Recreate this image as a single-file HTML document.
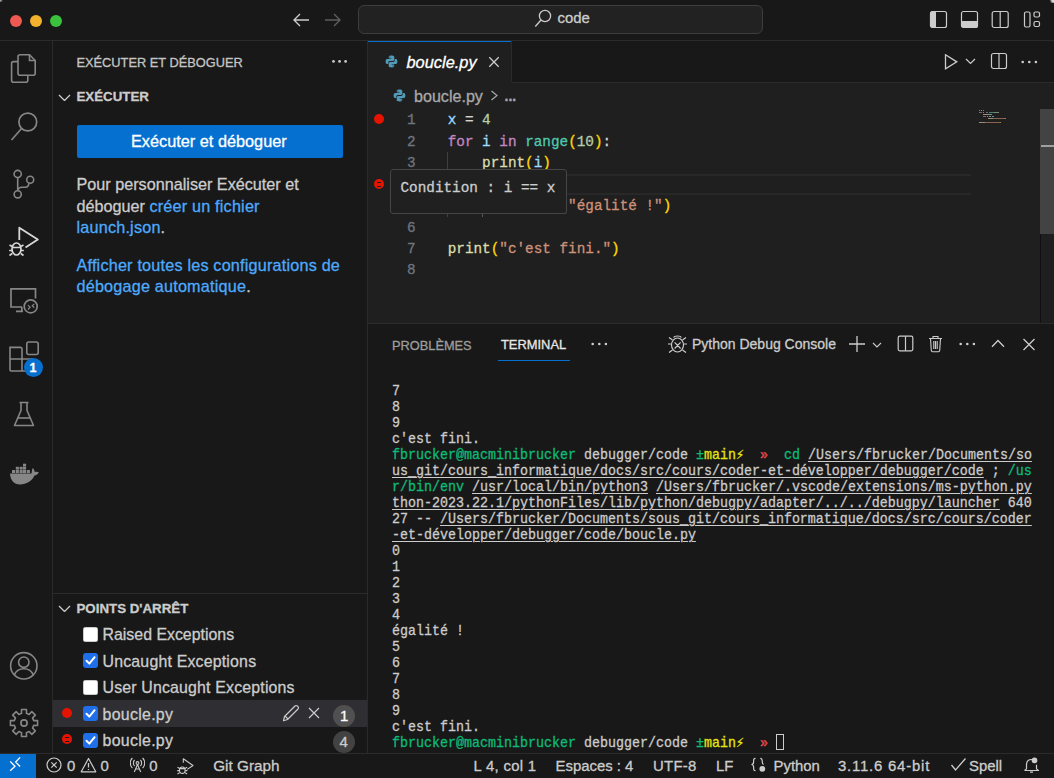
<!DOCTYPE html>
<html><head><meta charset="utf-8"><style>
html,body{margin:0;padding:0;}
body{width:1054px;height:778px;overflow:hidden;position:relative;background:#181818;font-family:'Liberation Sans', sans-serif;}
.r{position:absolute;}
.t{position:absolute;line-height:0;white-space:pre;-webkit-text-stroke:0.3px currentColor;}
u{text-decoration:underline;text-underline-offset:2px;text-decoration-thickness:1px;}
</style></head><body>
<div class="r" style="left:0px;top:0px;width:1054px;height:40px;background:#181818;"></div>
<div class="r" style="left:0px;top:40px;width:1054px;height:1px;background:#2b2b2b;"></div>
<div class="r" style="left:10px;top:14.7px;width:12px;height:12px;border-radius:50%;background:#ee5952"></div>
<div class="r" style="left:30px;top:14.7px;width:12px;height:12px;border-radius:50%;background:#f4b12b"></div>
<div class="r" style="left:50px;top:14.7px;width:12px;height:12px;border-radius:50%;background:#3ac13e"></div>
<svg class="r" style="left:292px;top:12px" width="19" height="16" viewBox="0 0 19 16" fill="none"><path d="M2 8 H17 M8 2 L2 8 L8 14" stroke="#cccccc" stroke-width="1.4"/></svg>
<svg class="r" style="left:324px;top:12px" width="19" height="16" viewBox="0 0 19 16" fill="none"><path d="M1 8 H16 M10 2 L16 8 L10 14" stroke="#5e5e5e" stroke-width="1.4"/></svg>
<div class="r" style="left:358px;top:5px;width:403px;height:27px;border:1px solid #3d3d3d;border-radius:6px;background:#222222"></div>
<svg class="r" style="left:534px;top:9px" width="18" height="19" viewBox="0 0 18 19" fill="none"><circle cx="11" cy="7" r="5.6" stroke="#cccccc" stroke-width="1.3"/><path d="M7 11 L1.3 17.5" stroke="#cccccc" stroke-width="1.3"/></svg>
<div class="t" style="left:557.50px;top:18.48px;font-family:'Liberation Sans', sans-serif;font-size:14.9px;color:#cccccc;font-weight:400;font-style:normal;">code</div>
<svg class="r" style="left:929px;top:10px" width="19" height="19" viewBox="0 0 19 19" fill="none"><rect x="1.5" y="1.5" width="16" height="16" rx="2" stroke="#cccccc" stroke-width="1.2"/><rect x="1.5" y="1.5" width="5.5" height="16" rx="1" fill="#cccccc"/></svg>
<svg class="r" style="left:960px;top:10px" width="19" height="19" viewBox="0 0 19 19" fill="none"><rect x="1.5" y="1.5" width="16" height="16" rx="2" stroke="#cccccc" stroke-width="1.2"/><rect x="1.5" y="11" width="16" height="6.5" rx="1" fill="#cccccc"/></svg>
<svg class="r" style="left:991px;top:10px" width="19" height="19" viewBox="0 0 19 19" fill="none"><rect x="1.2" y="1.5" width="16" height="16" rx="2" stroke="#cccccc" stroke-width="1.2"/><path d="M9.2 1.5 V17.5" stroke="#cccccc" stroke-width="1.2"/></svg>
<svg class="r" style="left:1023px;top:10px" width="19" height="19" viewBox="0 0 19 19" fill="none"><rect x="1.5" y="2" width="5.5" height="15" rx="1.5" stroke="#cccccc" stroke-width="1.2"/><rect x="11" y="2" width="5.5" height="5" rx="1.5" stroke="#cccccc" stroke-width="1.2"/><rect x="11" y="11.5" width="5.5" height="5" rx="1.5" stroke="#cccccc" stroke-width="1.2"/></svg>
<div class="r" style="left:0px;top:41px;width:52px;height:713px;background:#181818;"></div>
<div class="r" style="left:52px;top:41px;width:1px;height:712px;background:#2b2b2b;"></div>
<svg class="r" style="left:9px;top:52px" width="30" height="33" viewBox="0 0 30 33" fill="none"><path d="M9 9.6 H4.6 a2 2 0 0 0 -2 2 V28.2 a2 2 0 0 0 2 2 H16.8 a2 2 0 0 0 2 -2 V23.2" stroke="#868686" stroke-width="1.6"/><path d="M11 2.8 H20.5 L26.2 8.5 V21.2 a2 2 0 0 1 -2 2 H11 a2 2 0 0 1 -2 -2 V4.8 a2 2 0 0 1 2 -2 Z" stroke="#868686" stroke-width="1.6"/><path d="M20.5 2.8 V8.5 H26.2" stroke="#868686" stroke-width="1.6"/></svg>
<svg class="r" style="left:9px;top:110px" width="30" height="33" viewBox="0 0 30 33" fill="none"><circle cx="18.8" cy="12" r="8.9" stroke="#868686" stroke-width="1.7"/><path d="M12.8 18.2 L2.5 30" stroke="#868686" stroke-width="1.7"/></svg>
<svg class="r" style="left:9px;top:166px" width="30" height="34" viewBox="0 0 30 34" fill="none"><circle cx="8.7" cy="8" r="3.6" stroke="#868686" stroke-width="1.6"/><circle cx="8.7" cy="28.3" r="3.6" stroke="#868686" stroke-width="1.6"/><circle cx="21.2" cy="13.8" r="3.5" stroke="#868686" stroke-width="1.6"/><path d="M8.7 11.6 V24.7 M8.7 24 Q9.5 21.5 13 21.3 H16.5 Q19.6 21.3 20 17.2" stroke="#868686" stroke-width="1.6"/></svg>
<svg class="r" style="left:8px;top:225px" width="32" height="34" viewBox="0 0 32 34" fill="none"><path d="M11.3 15 V2.7 L29.8 14.6 L17.5 22.5" stroke="#d7d7d7" stroke-width="1.8" stroke-linejoin="round"/><ellipse cx="8.5" cy="24" rx="4.5" ry="6" stroke="#d7d7d7" stroke-width="1.7"/><path d="M4 22.5 H13 M1.5 20 L4.2 21.5 M15.5 20 L12.8 21.5 M1.2 25.5 H4 M15.8 25.5 H13 M1.5 30.5 L4.2 28.5 M15.5 30.5 L12.8 28.5" stroke="#d7d7d7" stroke-width="1.6"/></svg>
<svg class="r" style="left:9px;top:286px" width="30" height="30" viewBox="0 0 30 30" fill="none"><path d="M13 21 H2 V2.8 H26.5 V12.5 M7 25.3 H14 M12.8 21 V25.3" stroke="#868686" stroke-width="1.7"/><circle cx="21.7" cy="20.4" r="6.5" stroke="#868686" stroke-width="1.7"/><path d="M18.9 19.1 L21.2 21.2 L18.9 23.5 M25.3 17.9 L23.2 19.8 L25.3 21.7" stroke="#868686" stroke-width="1.2"/></svg>
<svg class="r" style="left:8px;top:340px" width="32" height="32" viewBox="0 0 32 32" fill="none"><path d="M2 7.4 h10.5 a1.5 1.5 0 0 1 1.5 1.5 V19 H24 a1.5 1.5 0 0 1 1.5 1.5 V31 H3.5 a1.5 1.5 0 0 1 -1.5 -1.5 Z M2 19 H14 V31" stroke="#868686" stroke-width="1.6"/><rect x="18.8" y="2" width="11.4" height="12.5" rx="2" stroke="#868686" stroke-width="1.6"/></svg>
<div class="r" style="left:23.9px;top:357.9px;width:19px;height:19px;border-radius:50%;background:#0670d1"></div>
<div class="t" style="left:29.60px;top:367.93px;font-family:'Liberation Sans', sans-serif;font-size:12.5px;color:#ffffff;font-weight:700;font-style:normal;">1</div>
<svg class="r" style="left:12px;top:400px" width="24" height="28" viewBox="0 0 24 28" fill="none"><path d="M7.5 2.5 H16.5 M9 2.5 V10.5 L2.5 25.5 H21.5 L15 10.5 V2.5" stroke="#868686" stroke-width="1.6" stroke-linejoin="round"/><path d="M5.5 18 H18.5" stroke="#868686" stroke-width="1.6"/></svg>
<svg class="r" style="left:9px;top:461px" width="31" height="25" viewBox="0 0 31 25" fill="none"><path d="M1 12.5 H22.5 C23 10.5 22.8 8.5 23.8 7 C24.8 8 25.5 9.5 25.8 11 C27 10.5 28.8 10.6 29.8 11.2 C29 13 27.5 14.5 25.5 14.5 C23 20 17.5 23.5 11 23.5 C5 23.5 1.2 19 1 12.5 Z" fill="#868686"/><g fill="#868686"><rect x="3" y="9" width="3.1" height="3"/><rect x="6.8" y="9" width="3.1" height="3"/><rect x="10.6" y="9" width="3.1" height="3"/><rect x="14" y="9" width="3.1" height="3"/><rect x="17.8" y="9" width="3.1" height="3"/><rect x="6.8" y="5.8" width="3.1" height="2.8"/><rect x="10.6" y="5.8" width="3.1" height="2.8"/><rect x="14" y="5.8" width="3.1" height="2.8"/><rect x="14" y="2.7" width="3.1" height="2.8"/></g></svg>
<svg class="r" style="left:9px;top:651px" width="30" height="30" viewBox="0 0 30 30" fill="none"><circle cx="14.8" cy="14.8" r="13.2" stroke="#868686" stroke-width="1.6"/><circle cx="14.8" cy="11.2" r="5.2" stroke="#868686" stroke-width="1.6"/><path d="M5.3 24.2 C7 19.5 10.5 17.8 14.8 17.8 C19 17.8 22.6 19.5 24.3 24.2" stroke="#868686" stroke-width="1.6"/></svg>
<svg class="r" style="left:9px;top:708px" width="30" height="30" viewBox="0 0 30 30" fill="none"><polygon points="24.70,12.58 28.57,12.49 28.57,17.51 24.70,17.42 23.57,20.15 26.37,22.82 22.82,26.37 20.15,23.57 17.42,24.70 17.51,28.57 12.49,28.57 12.58,24.70 9.85,23.57 7.18,26.37 3.63,22.82 6.43,20.15 5.30,17.42 1.43,17.51 1.43,12.49 5.30,12.58 6.43,9.85 3.63,7.18 7.18,3.63 9.85,6.43 12.58,5.30 12.49,1.43 17.51,1.43 17.42,5.30 20.15,6.43 22.82,3.63 26.37,7.18 23.57,9.85" stroke="#868686" stroke-width="1.6" stroke-linejoin="round"/><circle cx="15" cy="15" r="3.1" stroke="#868686" stroke-width="1.7"/></svg>
<div class="r" style="left:53px;top:41px;width:314px;height:712px;background:#181818;"></div>
<div class="r" style="left:367px;top:41px;width:1px;height:712px;background:#2b2b2b;"></div>
<div class="t" style="left:76.50px;top:62.72px;font-family:'Liberation Sans', sans-serif;font-size:12.8px;color:#c4c4c4;font-weight:400;font-style:normal;">EXÉCUTER ET DÉBOGUER</div>
<svg class="r" style="left:330px;top:58px" width="20" height="6" viewBox="0 0 20 6" fill="none"><circle cx="3.5" cy="3.4" r="1.35" fill="#cccccc"/><circle cx="9.55" cy="3.4" r="1.35" fill="#cccccc"/><circle cx="15.6" cy="3.4" r="1.35" fill="#cccccc"/></svg>
<svg class="r" style="left:58px;top:93.8px" width="13" height="7.5" viewBox="0 0 13 7.5" fill="none"><path d="M1 1 L6.5 6.5 L12 1" stroke="#cccccc" stroke-width="1.3"/></svg>
<div class="t" style="left:76.50px;top:96.64px;font-family:'Liberation Sans', sans-serif;font-size:13.3px;color:#cccccc;font-weight:700;font-style:normal;">EXÉCUTER</div>
<div class="r" style="left:77px;top:125px;width:266px;height:32.5px;border-radius:2px;background:#0670d1"></div>
<div class="t" style="left:131.00px;top:141.29px;font-family:'Liberation Sans', sans-serif;font-size:16.3px;color:#ffffff;font-weight:400;font-style:normal;">Exécuter et déboguer</div>
<div class="t" style="left:76.50px;top:184.43px;font-family:'Liberation Sans', sans-serif;font-size:16.2px;color:#cccccc;font-weight:400;font-style:normal;">Pour personnaliser Exécuter et</div>
<div class="t" style="left:76.50px;top:205.93px;font-family:'Liberation Sans', sans-serif;font-size:16.2px;color:#cccccc;font-weight:400;font-style:normal;">déboguer <span style="color:#4daafc;letter-spacing:0.2px;">créer un fichier</span></div>
<div class="t" style="left:76.50px;top:227.23px;font-family:'Liberation Sans', sans-serif;font-size:16.2px;color:#cccccc;font-weight:400;font-style:normal;"><span style="color:#4daafc;letter-spacing:0.2px;">launch.json</span>.</div>
<div class="t" style="left:76.50px;top:264.83px;font-family:'Liberation Sans', sans-serif;font-size:16.2px;color:#cccccc;font-weight:400;font-style:normal;"><span style="color:#4daafc;letter-spacing:0.2px;">Afficher toutes les configurations de</span></div>
<div class="t" style="left:76.50px;top:286.13px;font-family:'Liberation Sans', sans-serif;font-size:16.2px;color:#cccccc;font-weight:400;font-style:normal;"><span style="color:#4daafc;letter-spacing:0.2px;">débogage automatique</span>.</div>
<div class="r" style="left:53px;top:593px;width:314px;height:1px;background:#2b2b2b;"></div>
<svg class="r" style="left:58px;top:604.6px" width="13" height="7.5" viewBox="0 0 13 7.5" fill="none"><path d="M1 1 L6.5 6.5 L12 1" stroke="#cccccc" stroke-width="1.3"/></svg>
<div class="t" style="left:76.50px;top:608.85px;font-family:'Liberation Sans', sans-serif;font-size:13.3px;color:#cccccc;font-weight:700;font-style:normal;">POINTS D'ARRÊT</div>
<div class="r" style="left:53px;top:700px;width:314px;height:27px;background:#2e2e33;"></div>
<div class="r" style="left:83px;top:626.5px;width:15px;height:15px;border-radius:3px;background:#ffffff;box-shadow:inset 0 0 0 0.5px #9a9a9a"></div>
<div class="t" style="left:102.50px;top:635.43px;font-family:'Liberation Sans', sans-serif;font-size:15.9px;color:#cccccc;font-weight:400;font-style:normal;letter-spacing:0px">Raised Exceptions</div>
<div class="r" style="left:83px;top:653px;width:15px;height:15px;border-radius:3px;background:#1f6feb"></div>
<svg class="r" style="left:83px;top:653px" width="15" height="15" viewBox="0 0 15 15" fill="none"><path d="M3.5 7.8 L6.3 10.6 L11.6 4.2" stroke="#ffffff" stroke-width="2" stroke-linecap="round" stroke-linejoin="round"/></svg>
<div class="t" style="left:102.50px;top:661.93px;font-family:'Liberation Sans', sans-serif;font-size:15.9px;color:#cccccc;font-weight:400;font-style:normal;letter-spacing:0.19px">Uncaught Exceptions</div>
<div class="r" style="left:83px;top:679.5px;width:15px;height:15px;border-radius:3px;background:#ffffff;box-shadow:inset 0 0 0 0.5px #9a9a9a"></div>
<div class="t" style="left:102.50px;top:688.43px;font-family:'Liberation Sans', sans-serif;font-size:15.9px;color:#cccccc;font-weight:400;font-style:normal;letter-spacing:0.17px">User Uncaught Exceptions</div>
<div class="r" style="left:83px;top:706px;width:15px;height:15px;border-radius:3px;background:#1f6feb"></div>
<svg class="r" style="left:83px;top:706px" width="15" height="15" viewBox="0 0 15 15" fill="none"><path d="M3.5 7.8 L6.3 10.6 L11.6 4.2" stroke="#ffffff" stroke-width="2" stroke-linecap="round" stroke-linejoin="round"/></svg>
<div class="t" style="left:102.50px;top:714.93px;font-family:'Liberation Sans', sans-serif;font-size:15.9px;color:#cccccc;font-weight:400;font-style:normal;letter-spacing:0.3px">boucle.py</div>
<div class="r" style="left:83px;top:732.5px;width:15px;height:15px;border-radius:3px;background:#1f6feb"></div>
<svg class="r" style="left:83px;top:732.5px" width="15" height="15" viewBox="0 0 15 15" fill="none"><path d="M3.5 7.8 L6.3 10.6 L11.6 4.2" stroke="#ffffff" stroke-width="2" stroke-linecap="round" stroke-linejoin="round"/></svg>
<div class="t" style="left:102.50px;top:741.43px;font-family:'Liberation Sans', sans-serif;font-size:15.9px;color:#cccccc;font-weight:400;font-style:normal;letter-spacing:0.3px">boucle.py</div>
<div class="r" style="left:61.9px;top:708.4px;width:9.8px;height:9.8px;border-radius:50%;background:#e51400"></div>
<div class="r" style="left:61.9px;top:734.3px;width:9.8px;height:9.8px;border-radius:50%;background:#e51400"></div>
<div class="r" style="left:64.5px;top:737.3px;width:4.6px;height:1.2px;background:#181818;"></div>
<div class="r" style="left:64.5px;top:740.6px;width:4.6px;height:1.2px;background:#181818;"></div>
<svg class="r" style="left:281px;top:703px" width="19" height="20" viewBox="0 0 19 20" fill="none"><path d="M2.5 17.8 L3.5 13.5 L14 3 a1.6 1.6 0 0 1 2.3 0 L17 3.7 a1.6 1.6 0 0 1 0 2.3 L6.5 16.5 Z M4 13 L7 16" stroke="#cccccc" stroke-width="1.2" stroke-linejoin="round"/></svg>
<svg class="r" style="left:308px;top:707px" width="12" height="12" viewBox="0 0 12 12" fill="none"><path d="M1 1 L11 11 M11 1 L1 11" stroke="#cccccc" stroke-width="1.2"/></svg>
<div class="r" style="left:333px;top:704.9px;width:22px;height:22px;border-radius:50%;background:#505050"></div>
<div class="t" style="left:340.00px;top:715.75px;font-family:'Liberation Sans', sans-serif;font-size:15px;color:#ffffff;font-weight:400;font-style:normal;">1</div>
<div class="r" style="left:333px;top:731.2px;width:22px;height:22px;border-radius:50%;background:#424242"></div>
<div class="t" style="left:339.50px;top:741.95px;font-family:'Liberation Sans', sans-serif;font-size:15px;color:#cccccc;font-weight:400;font-style:normal;">4</div>
<div class="r" style="left:368px;top:41px;width:686px;height:282px;background:#1f1f1f;"></div>
<div class="r" style="left:511px;top:41px;width:543px;height:41px;background:#181818;"></div>
<div class="r" style="left:511px;top:41px;width:1px;height:41px;background:#2b2b2b;"></div>
<div class="r" style="left:512px;top:82px;width:542px;height:1px;background:#2b2b2b;"></div>
<div class="r" style="left:368px;top:41px;width:143px;height:1px;background:#0670d1;"></div>
<svg class="r" style="left:385px;top:55px" width="13" height="13" viewBox="0 0 13 13" fill="none"><path d="M6.3 0.6 C3.6 0.6 3.8 1.8 3.8 1.8 V3.4 H6.4 V4 H2.5 C2.5 4 0.6 3.8 0.6 6.5 C0.6 9.2 2.3 9.1 2.3 9.1 H3.3 V7.7 C3.3 7.7 3.2 6 5 6 H7.7 C7.7 6 9.3 6 9.3 4.5 V2 C9.3 2 9.6 0.6 6.3 0.6 Z M4.9 1.5 a0.5 0.5 0 1 1 0 1 a0.5 0.5 0 0 1 0 -1Z" fill="#519aba"/><path d="M6.7 12.4 C9.4 12.4 9.2 11.2 9.2 11.2 V9.6 H6.6 V9 H10.5 C10.5 9 12.4 9.2 12.4 6.5 C12.4 3.8 10.7 3.9 10.7 3.9 H9.7 V5.3 C9.7 5.3 9.8 7 8 7 H5.3 C5.3 7 3.7 7 3.7 8.5 V11 C3.7 11 3.4 12.4 6.7 12.4 Z M8.1 11.5 a0.5 0.5 0 1 1 0 -1 a0.5 0.5 0 0 1 0 1Z" fill="#519aba"/></svg>
<div class="t" style="left:406.50px;top:62.16px;font-family:'Liberation Sans', sans-serif;font-size:16.4px;color:#ffffff;font-weight:400;font-style:italic;">boucle.py</div>
<svg class="r" style="left:488px;top:56px" width="12" height="12" viewBox="0 0 12 12" fill="none"><path d="M1.3 1.3 L10.7 10.7 M10.7 1.3 L1.3 10.7" stroke="#cccccc" stroke-width="1.3"/></svg>
<svg class="r" style="left:943px;top:53px" width="16" height="18" viewBox="0 0 16 18" fill="none"><path d="M2.5 1.8 L13.8 8.85 L2.5 15.9 Z" stroke="#cccccc" stroke-width="1.3" stroke-linejoin="miter"/></svg>
<svg class="r" style="left:965px;top:57.6px" width="11" height="7" viewBox="0 0 11 7" fill="none"><path d="M1 1 L5.5 5.5 L10 1" stroke="#cccccc" stroke-width="1.2"/></svg>
<svg class="r" style="left:990px;top:52px" width="18" height="18" viewBox="0 0 18 18" fill="none"><rect x="1.5" y="1.5" width="15" height="15" rx="2" stroke="#cccccc" stroke-width="1.2"/><path d="M9 1.5 V16.5" stroke="#cccccc" stroke-width="1.2"/></svg>
<svg class="r" style="left:1020px;top:59px" width="19" height="6" viewBox="0 0 19 6" fill="none"><circle cx="2.7" cy="3" r="1.3" fill="#cccccc"/><circle cx="9.3" cy="3" r="1.3" fill="#cccccc"/><circle cx="15.9" cy="3" r="1.3" fill="#cccccc"/></svg>
<svg class="r" style="left:392.5px;top:89px" width="13" height="13" viewBox="0 0 13 13" fill="none"><path d="M6.3 0.6 C3.6 0.6 3.8 1.8 3.8 1.8 V3.4 H6.4 V4 H2.5 C2.5 4 0.6 3.8 0.6 6.5 C0.6 9.2 2.3 9.1 2.3 9.1 H3.3 V7.7 C3.3 7.7 3.2 6 5 6 H7.7 C7.7 6 9.3 6 9.3 4.5 V2 C9.3 2 9.6 0.6 6.3 0.6 Z M4.9 1.5 a0.5 0.5 0 1 1 0 1 a0.5 0.5 0 0 1 0 -1Z" fill="#519aba"/><path d="M6.7 12.4 C9.4 12.4 9.2 11.2 9.2 11.2 V9.6 H6.6 V9 H10.5 C10.5 9 12.4 9.2 12.4 6.5 C12.4 3.8 10.7 3.9 10.7 3.9 H9.7 V5.3 C9.7 5.3 9.8 7 8 7 H5.3 C5.3 7 3.7 7 3.7 8.5 V11 C3.7 11 3.4 12.4 6.7 12.4 Z M8.1 11.5 a0.5 0.5 0 1 1 0 -1 a0.5 0.5 0 0 1 0 1Z" fill="#519aba"/></svg>
<div class="t" style="left:414.00px;top:95.56px;font-family:'Liberation Sans', sans-serif;font-size:16.1px;color:#a9a9a9;font-weight:400;font-style:normal;">boucle.py</div>
<svg class="r" style="left:490px;top:90px" width="9" height="11" viewBox="0 0 9 11" fill="none"><path d="M1.5 1 L7 5.5 L1.5 10" stroke="#a9a9a9" stroke-width="1.2"/></svg>
<div class="t" style="left:504.50px;top:95.60px;font-family:'Liberation Sans', sans-serif;font-size:14px;color:#a9a9a9;font-weight:700;font-style:normal;">...</div>
<div class="r" style="left:447px;top:174px;width:524px;height:1.5px;background:#282828;"></div>
<div class="r" style="left:447px;top:193.3px;width:524px;height:1.5px;background:#282828;"></div>
<div class="r" style="left:446.8px;top:151.9px;width:1px;height:64.94999999999999px;background:#404040;"></div>
<div class="r" style="left:482px;top:194.8px;width:1px;height:22.05px;background:#5a5a5a;"></div>
<div class="t" style="left:406.90px;top:120.27px;font-family:'Liberation Mono', monospace;font-size:14.33px;color:#6e7681;font-weight:400;font-style:normal;">1</div>
<div class="t" style="left:406.90px;top:141.72px;font-family:'Liberation Mono', monospace;font-size:14.33px;color:#6e7681;font-weight:400;font-style:normal;">2</div>
<div class="t" style="left:406.90px;top:163.17px;font-family:'Liberation Mono', monospace;font-size:14.33px;color:#6e7681;font-weight:400;font-style:normal;">3</div>
<div class="t" style="left:406.90px;top:184.62px;font-family:'Liberation Mono', monospace;font-size:14.33px;color:#6e7681;font-weight:400;font-style:normal;">4</div>
<div class="t" style="left:406.90px;top:206.07px;font-family:'Liberation Mono', monospace;font-size:14.33px;color:#6e7681;font-weight:400;font-style:normal;">5</div>
<div class="t" style="left:406.90px;top:227.52px;font-family:'Liberation Mono', monospace;font-size:14.33px;color:#6e7681;font-weight:400;font-style:normal;">6</div>
<div class="t" style="left:406.90px;top:248.97px;font-family:'Liberation Mono', monospace;font-size:14.33px;color:#6e7681;font-weight:400;font-style:normal;">7</div>
<div class="t" style="left:406.90px;top:270.42px;font-family:'Liberation Mono', monospace;font-size:14.33px;color:#6e7681;font-weight:400;font-style:normal;">8</div>
<div class="t" style="left:447.70px;top:120.27px;font-family:'Liberation Mono', monospace;font-size:14.33px;color:#d4d4d4;font-weight:400;font-style:normal;white-space:pre;"><span style="color:#9cdcfe">x</span><span style="color:#d4d4d4"> = </span><span style="color:#b5cea8">4</span></div>
<div class="t" style="left:447.70px;top:141.72px;font-family:'Liberation Mono', monospace;font-size:14.33px;color:#d4d4d4;font-weight:400;font-style:normal;white-space:pre;"><span style="color:#c586c0">for</span> <span style="color:#9cdcfe">i</span> <span style="color:#c586c0">in</span> <span style="color:#4ec9b0">range</span><span style="color:#ffd700">(</span><span style="color:#b5cea8">10</span><span style="color:#ffd700">)</span><span style="color:#d4d4d4">:</span></div>
<div class="t" style="left:447.70px;top:163.17px;font-family:'Liberation Mono', monospace;font-size:14.33px;color:#d4d4d4;font-weight:400;font-style:normal;white-space:pre;">    <span style="color:#dcdcaa">print</span><span style="color:#ffd700">(</span><span style="color:#9cdcfe">i</span><span style="color:#ffd700">)</span></div>
<div class="t" style="left:447.70px;top:184.62px;font-family:'Liberation Mono', monospace;font-size:14.33px;color:#d4d4d4;font-weight:400;font-style:normal;white-space:pre;">    <span style="color:#c586c0">if</span> <span style="color:#9cdcfe">i</span><span style="color:#d4d4d4"> == </span><span style="color:#9cdcfe">x</span><span style="color:#d4d4d4">:</span></div>
<div class="t" style="left:447.70px;top:206.07px;font-family:'Liberation Mono', monospace;font-size:14.33px;color:#d4d4d4;font-weight:400;font-style:normal;white-space:pre;">        <span style="color:#dcdcaa">print</span><span style="color:#ffd700">(</span><span style="color:#ce9178">"égalité !"</span><span style="color:#ffd700">)</span></div>
<div class="t" style="left:447.70px;top:248.97px;font-family:'Liberation Mono', monospace;font-size:14.33px;color:#d4d4d4;font-weight:400;font-style:normal;white-space:pre;"><span style="color:#dcdcaa">print</span><span style="color:#ffd700">(</span><span style="color:#ce9178">"c'est fini."</span><span style="color:#ffd700">)</span></div>
<div class="r" style="left:374px;top:114.3px;width:10px;height:10px;border-radius:50%;background:#e51400"></div>
<div class="r" style="left:373.9px;top:179.4px;width:10px;height:10px;border-radius:50%;background:#e51400"></div>
<div class="r" style="left:376.6px;top:182px;width:4.6px;height:1.1px;background:#1f1f1f;"></div>
<div class="r" style="left:376.6px;top:185.9px;width:4.6px;height:1.1px;background:#1f1f1f;"></div>
<div class="r" style="left:389.6px;top:169px;width:175.5px;height:43px;border:1px solid #454545;border-radius:3px;background:#202020"></div>
<div class="t" style="left:400.50px;top:188.07px;font-family:'Liberation Mono', monospace;font-size:14.33px;color:#cccccc;font-weight:400;font-style:normal;white-space:pre;">Condition : i == x</div>
<div class="r" style="left:979.0px;top:109.5px;width:1.1px;height:1.6px;background:#9cdcfe;opacity:0.6"></div>
<div class="r" style="left:981.2px;top:109.5px;width:1.1px;height:1.6px;background:#d4d4d4;opacity:0.6"></div>
<div class="r" style="left:983.4px;top:109.5px;width:1.1px;height:1.6px;background:#b5cea8;opacity:0.6"></div>
<div class="r" style="left:979.0px;top:111.5px;width:3.3000000000000003px;height:1.6px;background:#c586c0;opacity:0.6"></div>
<div class="r" style="left:983.4px;top:111.5px;width:1.1px;height:1.6px;background:#9cdcfe;opacity:0.6"></div>
<div class="r" style="left:985.6px;top:111.5px;width:2.2px;height:1.6px;background:#c586c0;opacity:0.6"></div>
<div class="r" style="left:988.9px;top:111.5px;width:5.5px;height:1.6px;background:#4ec9b0;opacity:0.6"></div>
<div class="r" style="left:994.4px;top:111.5px;width:4.4px;height:1.6px;background:#b5cea8;opacity:0.6"></div>
<div class="r" style="left:983.4px;top:113.5px;width:5.5px;height:1.6px;background:#dcdcaa;opacity:0.6"></div>
<div class="r" style="left:988.9px;top:113.5px;width:3.3000000000000003px;height:1.6px;background:#9cdcfe;opacity:0.6"></div>
<div class="r" style="left:983.4px;top:115.5px;width:2.2px;height:1.6px;background:#c586c0;opacity:0.6"></div>
<div class="r" style="left:986.7px;top:115.5px;width:1.1px;height:1.6px;background:#9cdcfe;opacity:0.6"></div>
<div class="r" style="left:988.9px;top:115.5px;width:2.2px;height:1.6px;background:#d4d4d4;opacity:0.6"></div>
<div class="r" style="left:992.2px;top:115.5px;width:2.2px;height:1.6px;background:#9cdcfe;opacity:0.6"></div>
<div class="r" style="left:987.8px;top:117.5px;width:5.5px;height:1.6px;background:#dcdcaa;opacity:0.6"></div>
<div class="r" style="left:993.3px;top:117.5px;width:12.100000000000001px;height:1.6px;background:#ce9178;opacity:0.6"></div>
<div class="r" style="left:1005.4px;top:117.5px;width:1.1px;height:1.6px;background:#ffd700;opacity:0.6"></div>
<div class="r" style="left:979.0px;top:121.5px;width:5.5px;height:1.6px;background:#dcdcaa;opacity:0.6"></div>
<div class="r" style="left:984.5px;top:121.5px;width:15.400000000000002px;height:1.6px;background:#ce9178;opacity:0.6"></div>
<div class="r" style="left:999.9px;top:121.5px;width:1.1px;height:1.6px;background:#ffd700;opacity:0.6"></div>
<div class="r" style="left:1040px;top:109px;width:14px;height:125px;background:#434343;"></div>
<div class="r" style="left:1041px;top:145.2px;width:13px;height:2px;background:#a0a0a0;"></div>
<div class="r" style="left:1040px;top:234px;width:1px;height:89px;background:#101014;"></div>
<div class="r" style="left:368px;top:323px;width:686px;height:1px;background:#2b2b2b;"></div>
<div class="r" style="left:368px;top:324px;width:686px;height:429px;background:#181818;"></div>
<div class="t" style="left:392.00px;top:345.52px;font-family:'Liberation Sans', sans-serif;font-size:12.8px;color:#9d9d9d;font-weight:400;font-style:normal;">PROBLÈMES</div>
<div class="t" style="left:501.00px;top:345.49px;font-family:'Liberation Sans', sans-serif;font-size:12.9px;color:#e7e7e7;font-weight:400;font-style:normal;">TERMINAL</div>
<div class="r" style="left:498px;top:359.5px;width:72px;height:1.5px;background:#0670d1;"></div>
<svg class="r" style="left:590px;top:341px" width="19" height="6" viewBox="0 0 19 6" fill="none"><circle cx="2.7" cy="3" r="1.3" fill="#cccccc"/><circle cx="9.3" cy="3" r="1.3" fill="#cccccc"/><circle cx="15.9" cy="3" r="1.3" fill="#cccccc"/></svg>
<svg class="r" style="left:667px;top:333px" width="21" height="22" viewBox="0 0 21 22" fill="none"><path d="M6.5 4.5 C7.5 2.5 13.5 2.5 14.5 4.5" stroke="#cccccc" stroke-width="1.2"/><ellipse cx="10.5" cy="12" rx="6" ry="7" stroke="#cccccc" stroke-width="1.2"/><path d="M7.6 9.3 L13.6 15.5 M13.6 9.3 L7.6 15.5 M1 11 H4.5 M16.5 11 H20 M2 4.5 L5.5 7 M19 4.5 L15.5 7 M2 19.5 L5.5 17 M19 19.5 L15.5 17" stroke="#cccccc" stroke-width="1.2"/></svg>
<div class="t" style="left:692.00px;top:344.40px;font-family:'Liberation Sans', sans-serif;font-size:14.0px;color:#cccccc;font-weight:400;font-style:normal;">Python Debug Console</div>
<svg class="r" style="left:848px;top:335px" width="18" height="18" viewBox="0 0 18 18" fill="none"><path d="M9 1 V17 M1 9 H17" stroke="#cccccc" stroke-width="1.3"/></svg>
<svg class="r" style="left:872px;top:342px" width="10" height="6" viewBox="0 0 10 6" fill="none"><path d="M1 1 L5 5 L9 1" stroke="#cccccc" stroke-width="1.1"/></svg>
<svg class="r" style="left:897px;top:335px" width="17" height="17" viewBox="0 0 17 17" fill="none"><rect x="1.2" y="1.2" width="14.6" height="14.6" rx="1.5" stroke="#cccccc" stroke-width="1.2"/><path d="M8.5 1.2 V15.8" stroke="#cccccc" stroke-width="1.2"/></svg>
<svg class="r" style="left:928px;top:335px" width="15" height="18" viewBox="0 0 15 18" fill="none"><path d="M1 3.5 H14 M5 3.5 V1.5 H10 V3.5 M2.5 3.5 L3.3 15.5 a1.3 1.3 0 0 0 1.3 1.2 H10.4 a1.3 1.3 0 0 0 1.3 -1.2 L12.5 3.5 M5.8 6 V14 M7.5 6 V14 M9.2 6 V14" stroke="#cccccc" stroke-width="1.1"/></svg>
<svg class="r" style="left:958px;top:341px" width="19" height="6" viewBox="0 0 19 6" fill="none"><circle cx="2.7" cy="3" r="1.3" fill="#cccccc"/><circle cx="9.3" cy="3" r="1.3" fill="#cccccc"/><circle cx="15.9" cy="3" r="1.3" fill="#cccccc"/></svg>
<svg class="r" style="left:991px;top:339px" width="14" height="9" viewBox="0 0 14 9" fill="none"><path d="M1 7.8 L7 1.5 L13 7.8" stroke="#cccccc" stroke-width="1.3"/></svg>
<svg class="r" style="left:1022px;top:338px" width="14" height="13" viewBox="0 0 14 13" fill="none"><path d="M1.5 1 L12.5 12 M12.5 1 L1.5 12" stroke="#cccccc" stroke-width="1.3"/></svg>
<div class="t" style="left:392.00px;top:390.70px;font-family:'Liberation Mono', monospace;font-size:14.6px;color:#cccccc;font-weight:400;font-style:normal;white-space:pre;transform:scaleX(0.9132);transform-origin:0 0;">7</div>
<div class="t" style="left:392.00px;top:406.70px;font-family:'Liberation Mono', monospace;font-size:14.6px;color:#cccccc;font-weight:400;font-style:normal;white-space:pre;transform:scaleX(0.9132);transform-origin:0 0;">8</div>
<div class="t" style="left:392.00px;top:422.70px;font-family:'Liberation Mono', monospace;font-size:14.6px;color:#cccccc;font-weight:400;font-style:normal;white-space:pre;transform:scaleX(0.9132);transform-origin:0 0;">9</div>
<div class="t" style="left:392.00px;top:438.70px;font-family:'Liberation Mono', monospace;font-size:14.6px;color:#cccccc;font-weight:400;font-style:normal;white-space:pre;transform:scaleX(0.9132);transform-origin:0 0;">c'est fini.</div>
<div class="t" style="left:392.00px;top:454.70px;font-family:'Liberation Mono', monospace;font-size:14.6px;color:#cccccc;font-weight:400;font-style:normal;white-space:pre;transform:scaleX(0.9132);transform-origin:0 0;"><span style="color:#0dbc79">fbrucker@macminibrucker</span> debugger/code <span style="color:#0dbc79">±</span><span style="color:#e5e510">main⚡</span>  <span style="color:#f14c4c">»</span>  <span style="color:#0dbc79">cd</span> <u>/Users/fbrucker/Documents/so</u></div>
<div class="t" style="left:392.00px;top:470.70px;font-family:'Liberation Mono', monospace;font-size:14.6px;color:#cccccc;font-weight:400;font-style:normal;white-space:pre;transform:scaleX(0.9132);transform-origin:0 0;"><u>us_git/cours_informatique/docs/src/cours/coder-et-développer/debugger/code</u> ; <span style="color:#0dbc79">/us</span></div>
<div class="t" style="left:392.00px;top:486.70px;font-family:'Liberation Mono', monospace;font-size:14.6px;color:#cccccc;font-weight:400;font-style:normal;white-space:pre;transform:scaleX(0.9132);transform-origin:0 0;"><span style="color:#0dbc79">r/bin/env</span> <u>/usr/local/bin/python3</u> <u>/Users/fbrucker/.vscode/extensions/ms-python.py</u></div>
<div class="t" style="left:392.00px;top:502.70px;font-family:'Liberation Mono', monospace;font-size:14.6px;color:#cccccc;font-weight:400;font-style:normal;white-space:pre;transform:scaleX(0.9132);transform-origin:0 0;"><u>thon-2023.22.1/pythonFiles/lib/python/debugpy/adapter/../../debugpy/launcher</u> 640</div>
<div class="t" style="left:392.00px;top:518.70px;font-family:'Liberation Mono', monospace;font-size:14.6px;color:#cccccc;font-weight:400;font-style:normal;white-space:pre;transform:scaleX(0.9132);transform-origin:0 0;">27 -- <u>/Users/fbrucker/Documents/sous_git/cours_informatique/docs/src/cours/coder</u></div>
<div class="t" style="left:392.00px;top:534.70px;font-family:'Liberation Mono', monospace;font-size:14.6px;color:#cccccc;font-weight:400;font-style:normal;white-space:pre;transform:scaleX(0.9132);transform-origin:0 0;"><u>-et-développer/debugger/code/boucle.py</u></div>
<div class="t" style="left:392.00px;top:550.70px;font-family:'Liberation Mono', monospace;font-size:14.6px;color:#cccccc;font-weight:400;font-style:normal;white-space:pre;transform:scaleX(0.9132);transform-origin:0 0;">0</div>
<div class="t" style="left:392.00px;top:566.70px;font-family:'Liberation Mono', monospace;font-size:14.6px;color:#cccccc;font-weight:400;font-style:normal;white-space:pre;transform:scaleX(0.9132);transform-origin:0 0;">1</div>
<div class="t" style="left:392.00px;top:582.70px;font-family:'Liberation Mono', monospace;font-size:14.6px;color:#cccccc;font-weight:400;font-style:normal;white-space:pre;transform:scaleX(0.9132);transform-origin:0 0;">2</div>
<div class="t" style="left:392.00px;top:598.70px;font-family:'Liberation Mono', monospace;font-size:14.6px;color:#cccccc;font-weight:400;font-style:normal;white-space:pre;transform:scaleX(0.9132);transform-origin:0 0;">3</div>
<div class="t" style="left:392.00px;top:614.70px;font-family:'Liberation Mono', monospace;font-size:14.6px;color:#cccccc;font-weight:400;font-style:normal;white-space:pre;transform:scaleX(0.9132);transform-origin:0 0;">4</div>
<div class="t" style="left:392.00px;top:630.70px;font-family:'Liberation Mono', monospace;font-size:14.6px;color:#cccccc;font-weight:400;font-style:normal;white-space:pre;transform:scaleX(0.9132);transform-origin:0 0;">égalité !</div>
<div class="t" style="left:392.00px;top:646.70px;font-family:'Liberation Mono', monospace;font-size:14.6px;color:#cccccc;font-weight:400;font-style:normal;white-space:pre;transform:scaleX(0.9132);transform-origin:0 0;">5</div>
<div class="t" style="left:392.00px;top:662.70px;font-family:'Liberation Mono', monospace;font-size:14.6px;color:#cccccc;font-weight:400;font-style:normal;white-space:pre;transform:scaleX(0.9132);transform-origin:0 0;">6</div>
<div class="t" style="left:392.00px;top:678.70px;font-family:'Liberation Mono', monospace;font-size:14.6px;color:#cccccc;font-weight:400;font-style:normal;white-space:pre;transform:scaleX(0.9132);transform-origin:0 0;">7</div>
<div class="t" style="left:392.00px;top:694.70px;font-family:'Liberation Mono', monospace;font-size:14.6px;color:#cccccc;font-weight:400;font-style:normal;white-space:pre;transform:scaleX(0.9132);transform-origin:0 0;">8</div>
<div class="t" style="left:392.00px;top:710.70px;font-family:'Liberation Mono', monospace;font-size:14.6px;color:#cccccc;font-weight:400;font-style:normal;white-space:pre;transform:scaleX(0.9132);transform-origin:0 0;">9</div>
<div class="t" style="left:392.00px;top:726.70px;font-family:'Liberation Mono', monospace;font-size:14.6px;color:#cccccc;font-weight:400;font-style:normal;white-space:pre;transform:scaleX(0.9132);transform-origin:0 0;">c'est fini.</div>
<div class="t" style="left:392.00px;top:742.70px;font-family:'Liberation Mono', monospace;font-size:14.6px;color:#cccccc;font-weight:400;font-style:normal;white-space:pre;transform:scaleX(0.9132);transform-origin:0 0;"><span style="color:#0dbc79">fbrucker@macminibrucker</span> debugger/code <span style="color:#0dbc79">±</span><span style="color:#e5e510">main⚡</span>  <span style="color:#f14c4c">»</span>  </div>
<div class="r" style="left:776px;top:734px;width:8px;height:16px;box-sizing:border-box;border:1px solid #cccccc"></div>
<div class="r" style="left:0;top:0;width:3px;height:2px;background:radial-gradient(circle at 0 0,#9a9a9a 0,#9a9a9a 1px,rgba(24,24,24,0) 3px)"></div>
<div class="r" style="left:1049px;top:0;width:5px;height:3px;background:radial-gradient(circle at 100% 0,#d8d8e0 0,#d8d8e0 2px,rgba(24,24,24,0) 4.5px)"></div>
<div class="r" style="left:0px;top:753px;width:1054px;height:1px;background:#2b2b2b;"></div>
<div class="r" style="left:0px;top:754px;width:1054px;height:24px;background:#181818;"></div>
<div class="r" style="left:0px;top:754px;width:36px;height:24px;background:#0670d1;"></div>
<svg class="r" style="left:8px;top:755px" width="16" height="18" viewBox="0 0 16 18" fill="none"><path d="M2.2 6.4 L7 11.3 L2.2 15.7 M12.1 2.4 L7.7 7.1 L12.1 11.5" stroke="#ffffff" stroke-width="1.3"/></svg>
<svg class="r" style="left:45.5px;top:756.5px" width="16" height="16" viewBox="0 0 16 16" fill="none"><circle cx="8" cy="8" r="7" stroke="#cccccc" stroke-width="1.2"/><path d="M5.3 5.3 L10.7 10.7 M10.7 5.3 L5.3 10.7" stroke="#cccccc" stroke-width="1.2"/></svg>
<div class="t" style="left:67.00px;top:765.58px;font-family:'Liberation Sans', sans-serif;font-size:14.9px;color:#cccccc;font-weight:400;font-style:normal;">0</div>
<svg class="r" style="left:79.5px;top:756.5px" width="17" height="16" viewBox="0 0 17 16" fill="none"><path d="M8.5 1.5 L15.8 14.8 H1.2 Z" stroke="#cccccc" stroke-width="1.2" stroke-linejoin="round"/><path d="M8.5 6 V10.5 M8.5 12 V13" stroke="#cccccc" stroke-width="1.3"/></svg>
<div class="t" style="left:100.50px;top:765.58px;font-family:'Liberation Sans', sans-serif;font-size:14.9px;color:#cccccc;font-weight:400;font-style:normal;">0</div>
<svg class="r" style="left:130px;top:757px" width="15" height="16" viewBox="0 0 15 16" fill="none"><circle cx="7.5" cy="6" r="1.4" stroke="#cccccc" stroke-width="1.1"/><path d="M4.6 3 a4.2 4.2 0 0 0 0 6 M10.4 3 a4.2 4.2 0 0 1 0 6 M2.4 1 a7 7 0 0 0 0 10 M12.6 1 a7 7 0 0 1 0 10 M7.5 7.5 L4.3 15 M7.5 7.5 L10.7 15 M5.4 12 H9.6" stroke="#cccccc" stroke-width="1.1"/></svg>
<div class="t" style="left:149.20px;top:765.58px;font-family:'Liberation Sans', sans-serif;font-size:14.9px;color:#cccccc;font-weight:400;font-style:normal;">0</div>
<svg class="r" style="left:176px;top:756.5px" width="19" height="18" viewBox="0 0 19 18" fill="none"><path d="M7.3 5.8 V1.8 L17 8.5 L11.3 12.4" stroke="#cccccc" stroke-width="1.1" stroke-linejoin="round"/><ellipse cx="6.3" cy="13.2" rx="2.8" ry="3.2" stroke="#cccccc" stroke-width="1.1"/><path d="M3.6 11.6 H9 M1.5 10.3 L3.6 11.4 M11.1 10.3 L9 11.4 M1.2 13.6 H3.4 M11.4 13.6 H9.2 M1.5 17 L3.6 15.6 M11.1 17 L9 15.6" stroke="#cccccc" stroke-width="1.1"/></svg>
<div class="t" style="left:213.20px;top:765.64px;font-family:'Liberation Sans', sans-serif;font-size:15.3px;color:#cccccc;font-weight:400;font-style:normal;">Git Graph</div>
<div class="t" style="left:473.50px;top:765.78px;font-family:'Liberation Sans', sans-serif;font-size:14.9px;color:#cccccc;font-weight:400;font-style:normal;letter-spacing:0.3px">L 4, col 1</div>
<div class="t" style="left:555.50px;top:765.78px;font-family:'Liberation Sans', sans-serif;font-size:14.9px;color:#cccccc;font-weight:400;font-style:normal;">Espaces : 4</div>
<div class="t" style="left:653.00px;top:765.78px;font-family:'Liberation Sans', sans-serif;font-size:14.9px;color:#cccccc;font-weight:400;font-style:normal;letter-spacing:0.3px">UTF-8</div>
<div class="t" style="left:716.00px;top:765.78px;font-family:'Liberation Sans', sans-serif;font-size:14.9px;color:#cccccc;font-weight:400;font-style:normal;">LF</div>
<svg class="r" style="left:750px;top:757px" width="17" height="16" viewBox="0 0 17 16" fill="none"><path d="M5.5 1.3 C3.5 1.3 3.6 3 3.6 5 C3.6 6.5 2.9 7.3 1.5 7.5 C2.9 7.7 3.6 8.5 3.6 10 C3.6 12 3.5 13.7 5.5 13.7 M10.3 1.3 C12.3 1.3 12.3 3 12.3 5 C12.3 6.2 12.7 7 13.5 7.5" stroke="#cccccc" stroke-width="1.2"/><circle cx="12.3" cy="11.8" r="2.9" fill="#cccccc"/></svg>
<div class="t" style="left:773.50px;top:765.78px;font-family:'Liberation Sans', sans-serif;font-size:14.9px;color:#cccccc;font-weight:400;font-style:normal;">Python</div>
<div class="t" style="left:838.00px;top:765.78px;font-family:'Liberation Sans', sans-serif;font-size:14.9px;color:#cccccc;font-weight:400;font-style:normal;letter-spacing:0.8px">3.11.6 64-bit</div>
<svg class="r" style="left:949.5px;top:757px" width="17" height="15" viewBox="0 0 17 15" fill="none"><path d="M1.5 8 L5.5 13 L15.5 1.5" stroke="#cccccc" stroke-width="1.3"/></svg>
<div class="t" style="left:969.00px;top:765.78px;font-family:'Liberation Sans', sans-serif;font-size:14.9px;color:#cccccc;font-weight:400;font-style:normal;">Spell</div>
<svg class="r" style="left:1022px;top:756px" width="18" height="18" viewBox="0 0 18 18" fill="none"><path d="M4.5 13 V9 C4.5 5.5 6.5 3.5 9.5 3.5 C10.3 3.5 10.8 3.6 11.3 3.8 M14.5 8.8 V13 M2.5 14.5 H16.5 L14.5 13 M2.5 14.5 L4.5 13 M8 16.2 H11" stroke="#cccccc" stroke-width="1.2" stroke-linejoin="round"/><circle cx="12.5" cy="4.4" r="2.8" fill="#cccccc"/></svg>
</body></html>
